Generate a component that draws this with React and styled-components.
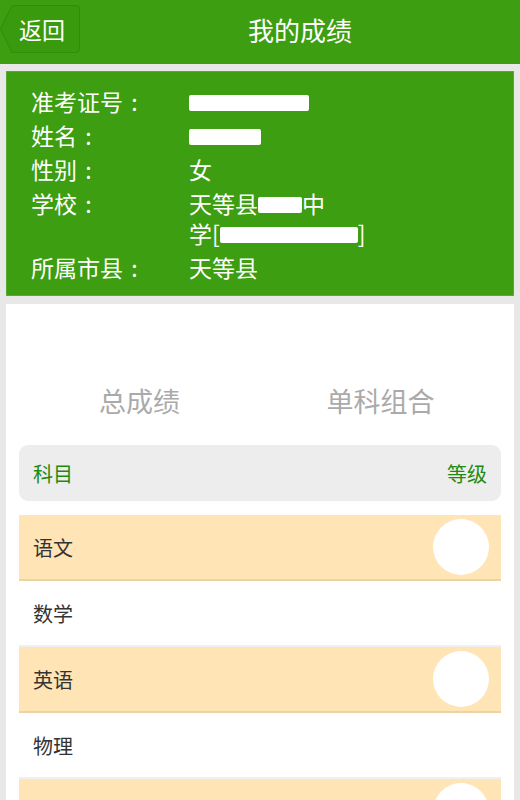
import React from "react";
import styled, { createGlobalStyle } from "styled-components";

const GlobalStyle = createGlobalStyle`
  html, body {
    margin: 0;
    padding: 0;
    background: #e8e8e8;
    font-family: "Noto Sans CJK SC", "Noto Sans", sans-serif;
  }
`;

const Page = styled.div`
  width: 520px;
  height: 800px;
  background: #e8e8e8;
  overflow: hidden;
`;

const Header = styled.div`
  height: 64px;
  background: #3c9e10;
  display: flex;
  align-items: center;
`;

const BackButton = styled.div`
  width: 80px;
  height: 48px;
  margin-top: -6px;
  display: flex;
  align-items: center;
  justify-content: center;
  color: #fff;
  font-size: 23px;
  position: relative;
  padding-left: 4px;
  box-sizing: border-box;

  svg {
    position: absolute;
    left: 0;
    top: 0;
  }

  span {
    position: relative;
  }
`;

const Title = styled.div`
  flex: 1;
  text-align: center;
  color: #fff;
  font-size: 26px;
  margin-top: -6px;
`;

const InfoPanel = styled.div`
  margin: 7px 6px 0;
  background: #3c9e10;
  border: 1px solid #56ac30;
  padding: 14px 0 13px 24px;
  display: flex;
  flex-direction: column;
  gap: 4px;
`;

const InfoRow = styled.div`
  display: flex;
  color: #fff;
  font-size: 23px;
  line-height: 30px;
`;

const Label = styled.div`
  width: 158px;
  flex-shrink: 0;
  display: flex;
`;

const Colon = styled.span`
  width: 1em;
  text-align: center;
`;

const Value = styled.div`
  width: 200px;
`;

const Mask = styled.span`
  display: inline-block;
  vertical-align: middle;
  width: ${(p) => p.w}px;
  height: ${(p) => p.h || 16}px;
  background: #fff;
  border-radius: 2px;
  margin-top: -4px;
`;

const Card = styled.div`
  margin: 8px 6px 0;
  background: #fff;
  padding: 66px 13px 0;
  min-height: 500px;
`;

const Tabs = styled.div`
  display: grid;
  grid-template-columns: 1fr 1fr;
  height: 60px;
  align-items: center;
`;

const Tab = styled.div`
  text-align: center;
  color: #aaa;
  font-size: 27px;
`;

const TableHead = styled.div`
  margin-top: 15px;
  height: 56px;
  background: #ededed;
  border-radius: 9px;
  display: flex;
  align-items: center;
  justify-content: space-between;
  padding: 0 14px;
  color: #1f8a12;
  font-size: 20px;
`;

const Rows = styled.div`
  margin-top: 14px;
  display: flex;
  flex-direction: column;
`;

const Row = styled.div`
  height: 64px;
  display: flex;
  align-items: center;
  justify-content: space-between;
  padding: 0 12px 0 14px;
  background: ${(p) => (p.$hl ? "#ffe4b5" : "#fff")};
  border-bottom: 2px solid ${(p) => (p.$hl ? "#eed3a2" : "#f0f0f0")};
  color: #333;
  font-size: 20px;
`;

const Badge = styled.div`
  width: 56px;
  height: 56px;
  border-radius: 50%;
  background: #fff;
`;

const info = [
  { label: "准考证号", mask: 120 },
  { label: "姓名", mask: 72 },
  { label: "性别", text: "女" },
];

const subjects = ["语文", "数学", "英语", "物理", "化学"];

export default function App() {
  return (
    <Page>
      <GlobalStyle />
      <Header>
        <BackButton>
          <svg width="80" height="48" viewBox="0 0 80 48">
            <path
              d="M12 0.5 H76 Q79.5 0.5 79.5 4 V44 Q79.5 47.5 76 47.5 H12 L0.5 24 Z"
              fill="#3a9a0e"
              stroke="#318c0a"
              strokeWidth="1"
            />
          </svg>
          <span>返回</span>
        </BackButton>
        <Title>我的成绩</Title>
      </Header>

      <InfoPanel>
        {info.map((r) => (
          <InfoRow key={r.label}>
            <Label>
              {r.label}
              <Colon>:</Colon>
            </Label>
            <Value>{r.text ? r.text : <Mask w={r.mask} />}</Value>
          </InfoRow>
        ))}
        <InfoRow>
          <Label>
            学校<Colon>:</Colon>
          </Label>
          <Value>
            天等县<Mask w={44} h={16} />中
            <br />
            学[<Mask w={138} h={16} />]
          </Value>
        </InfoRow>
        <InfoRow>
          <Label>
            所属市县<Colon>:</Colon>
          </Label>
          <Value>天等县</Value>
        </InfoRow>
      </InfoPanel>

      <Card>
        <Tabs>
          <Tab>总成绩</Tab>
          <Tab>单科组合</Tab>
        </Tabs>
        <TableHead>
          <span>科目</span>
          <span>等级</span>
        </TableHead>
        <Rows>
          {subjects.map((s, i) => (
            <Row key={s} $hl={i % 2 === 0}>
              <span>{s}</span>
              {i % 2 === 0 && <Badge />}
            </Row>
          ))}
        </Rows>
      </Card>
    </Page>
  );
}
